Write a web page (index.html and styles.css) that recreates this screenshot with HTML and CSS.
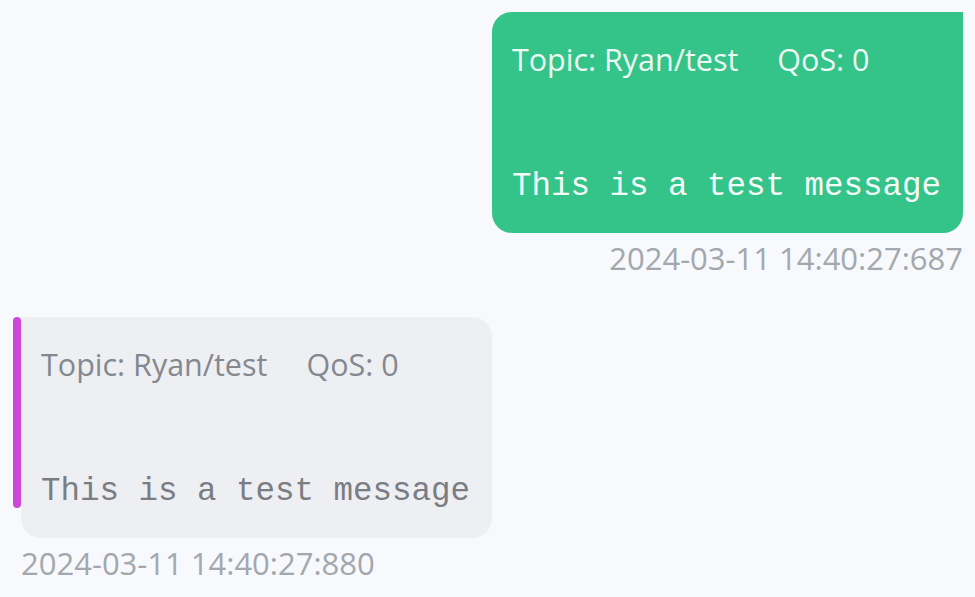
FILE: index.html
```html
<!DOCTYPE html>
<html lang="en">
<head>
<meta charset="utf-8">
<title>Messages</title>
<link rel="stylesheet" href="styles.css">
</head>
<body>
<div class="messages">
  <div class="msg msg-pub">
    <div class="bubble bubble-pub">
      <div class="meta"><span class="topic">Topic: Ryan/test</span><span class="qos">QoS: 0</span></div>
      <pre class="payload">This is a test message</pre>
    </div>
    <div class="time">2024-03-11 14:40:27:687</div>
  </div>
  <div class="msg msg-sub">
    <div class="row">
      <span class="bar"></span>
      <div class="bubble bubble-sub">
        <div class="meta"><span class="topic">Topic: Ryan/test</span><span class="qos">QoS: 0</span></div>
        <pre class="payload">This is a test message</pre>
      </div>
    </div>
    <div class="time time-sub">2024-03-11 14:40:27:880</div>
  </div>
</div>
</body>
</html>
```
FILE: styles.css
```css
html, body {
  margin: 0;
  padding: 0;
  background: #f8f9fd;
}
body {
  width: 975px;
  height: 597px;
  overflow: hidden;
  font-family: "Open Sans", "Noto Sans", sans-serif;
}
.messages {
  display: flex;
  flex-direction: column;
  padding: 12px 12px 0 13px;
  gap: 41px;
}
.msg {
  display: flex;
  flex-direction: column;
}
.msg-pub {
  align-items: flex-end;
}
.msg-sub {
  align-items: flex-start;
}
.row {
  display: flex;
  align-items: stretch;
}
.bar {
  width: 8px;
  margin-bottom: 30px;
  border-radius: 4px;
  background: #cd47d9;
}
.bubble {
  padding: 27px 22px 26px 20px;
  border-radius: 20px;
}
.bubble-pub {
  background: #34c388;
  color: #ffffff;
  border-top-right-radius: 0;
}
.bubble-sub {
  background: #eeeff3;
  color: #85888e;
  border-top-left-radius: 0;
}
.meta {
  display: flex;
  font-size: 30.5px;
  line-height: 40px;
  height: 40px;
  white-space: nowrap;
}
.bubble-pub .meta {
  color: #ecfaf3;
}
.qos {
  margin-left: 39px;
}
.payload {
  margin: 88px 0 0;
  font-family: "Liberation Mono", "Courier New", monospace;
  font-size: 32.5px;
  line-height: 40px;
  white-space: pre;
}
.bubble-pub .payload {
  color: #f4fcf8;
}
.bubble-sub .payload {
  color: #7b7d83;
}
.time {
  margin-top: 7px;
  font-size: 31px;
  line-height: 36px;
  color: #a3a7ae;
  white-space: nowrap;
}
.time-sub {
  margin-left: 8px;
}
```
